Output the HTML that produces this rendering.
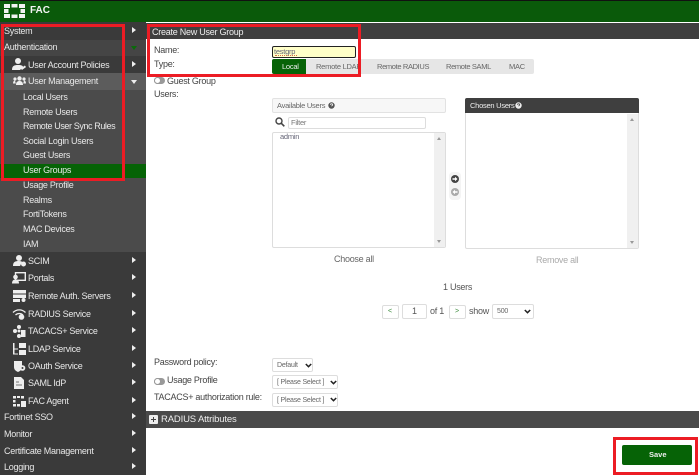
<!DOCTYPE html>
<html><head><meta charset="utf-8">
<style>
html,body{margin:0;padding:0;background:#fff}
#p{position:relative;width:699px;height:475px;overflow:hidden;background:#fff;font-family:"Liberation Sans",sans-serif;font-size:9px;letter-spacing:-.27px;color:#444}
#p div,#p span.a,#p svg{position:absolute}
.t{white-space:nowrap;line-height:12px;height:12px;filter:blur(.25px)}
.s{color:#e8e8e8}
.m{font-size:7.500px;letter-spacing:-.25px}
.arr{width:0;height:0;border-left:4px solid #eee;border-top:3.5px solid transparent;border-bottom:3.5px solid transparent;left:132px}
.red{border:3px solid #ec1c24;box-sizing:border-box}
.sel{box-sizing:border-box;border:1px solid #ddd;border-radius:2px;background:#fff;color:#666;font-size:7px;letter-spacing:-.2px;line-height:13px;padding-left:4px;white-space:nowrap}
.chev{width:7px;height:5px}
.b{box-sizing:border-box;border:1px solid #ddd;border-radius:2px;background:#fff}
</style></head><body><div id="p">
<div style="left:0;top:0;width:699px;height:1px;background:#111"></div>
<div style="left:0;top:1px;width:699px;height:21px;background:#0a5a0a"></div>
<svg style="left:4px;top:4px" width="21" height="14" viewBox="0 0 21 14"><g fill="#f2f2f2"><rect x="0" y="0" width="6" height="4"/><rect x="7.500" y="0" width="6" height="3.500"/><rect x="15" y="0" width="6" height="4"/><rect x="0" y="5" width="4.500" height="4"/><rect x="16.500" y="5" width="4.500" height="4"/><rect x="0" y="10" width="6" height="4"/><rect x="7.500" y="10.500" width="6" height="3.500"/><rect x="15" y="10" width="6" height="4"/></g></svg>
<div class="t" style="left:30px;top:4px;font-size:10px;font-weight:bold;letter-spacing:0;color:#f4f4f4;line-height:14px;height:14px">FAC</div>

<div style="left:0;top:22px;width:146px;height:453px;background:#3a3a3a"></div>
<div style="left:0;top:40px;width:146px;height:16px;background:#454545"></div>
<div style="left:0;top:73px;width:146px;height:17px;background:#5c5c5c"></div>
<div style="left:0;top:90px;width:146px;height:162px;background:#4b4b4b"></div>
<div style="left:0;top:164px;width:146px;height:14px;background:#066306"></div>

<div class="t s" style="left:4px;top:25px">System</div>
<div class="t s" style="left:4px;top:41px">Authentication</div>
<div class="t s" style="left:28px;top:59px">User Account Policies</div>
<div class="t s" style="left:28px;top:75px">User Management</div>
<div class="t s" style="left:23px;top:91px">Local Users</div>
<div class="t s" style="left:23px;top:106px">Remote Users</div>
<div class="t s" style="left:23px;top:120px;letter-spacing:-.4px">Remote User Sync Rules</div>
<div class="t s" style="left:23px;top:135px">Social Login Users</div>
<div class="t s" style="left:23px;top:149px">Guest Users</div>
<div class="t s" style="left:23px;top:164px">User Groups</div>
<div class="t s" style="left:23px;top:179px">Usage Profile</div>
<div class="t s" style="left:23px;top:194px">Realms</div>
<div class="t s" style="left:23px;top:208px">FortiTokens</div>
<div class="t s" style="left:23px;top:223px">MAC Devices</div>
<div class="t s" style="left:23px;top:238px">IAM</div>
<div class="t s" style="left:28px;top:255px">SCIM</div>
<div class="t s" style="left:28px;top:272px">Portals</div>
<div class="t s" style="left:28px;top:290px">Remote Auth. Servers</div>
<div class="t s" style="left:28px;top:308px">RADIUS Service</div>
<div class="t s" style="left:28px;top:325px">TACACS+ Service</div>
<div class="t s" style="left:28px;top:343px">LDAP Service</div>
<div class="t s" style="left:28px;top:360px">OAuth Service</div>
<div class="t s" style="left:28px;top:377px">SAML IdP</div>
<div class="t s" style="left:28px;top:395px">FAC Agent</div>
<div class="t s" style="left:4px;top:411px">Fortinet SSO</div>
<div class="t s" style="left:4px;top:428px">Monitor</div>
<div class="t s" style="left:4px;top:445px">Certificate Management</div>
<div class="t s" style="left:4px;top:461px">Logging</div>

<div class="arr" style="top:27px"></div>
<div style="left:131px;top:46px;width:0;height:0;border-top:4px solid #0a6a0a;border-left:3.5px solid transparent;border-right:3.5px solid transparent"></div>
<div class="arr" style="top:61px"></div>
<div style="left:131px;top:80px;width:0;height:0;border-top:4px solid #eee;border-left:3.5px solid transparent;border-right:3.5px solid transparent"></div>
<div class="arr" style="top:257px"></div>
<div class="arr" style="top:274px"></div>
<div class="arr" style="top:292px"></div>
<div class="arr" style="top:310px"></div>
<div class="arr" style="top:327px"></div>
<div class="arr" style="top:345px"></div>
<div class="arr" style="top:362px"></div>
<div class="arr" style="top:379px"></div>
<div class="arr" style="top:397px"></div>
<div class="arr" style="top:413px"></div>
<div class="arr" style="top:430px"></div>
<div class="arr" style="top:447px"></div>
<div class="arr" style="top:463px"></div>

<!-- side icons -->
<svg style="left:12px;top:58px" width="14" height="13" viewBox="0 0 14 13"><g fill="#eee"><circle cx="6" cy="3" r="3"/><path d="M0 12c0-4 2-5 6-5s5 1 5 2l-3 3z"/><rect x="9" y="9" width="5" height="2" transform="rotate(-35 11 10)"/></g></svg>
<svg style="left:13px;top:76px" width="13" height="10" viewBox="0 0 13 10"><g fill="#eee"><circle cx="6.5" cy="2.5" r="2.2"/><circle cx="2" cy="3" r="1.6"/><circle cx="11" cy="3" r="1.6"/><path d="M3 9c0-3 1.500-4 3.500-4s3.500 1 3.500 4zM0 7.500c0-2 .8-3 2-3l.8 3zM13 7.500c0-2-.8-3-2-3l-.8 3z"/></g></svg>
<svg style="left:13px;top:255px" width="13" height="12" viewBox="0 0 13 12"><g fill="#eee"><circle cx="6" cy="3" r="3"/><path d="M0 11c0-4 2-5 6-5 2 0 3 .5 3 1l-2 4z"/><circle cx="10.500" cy="9" r="2.500"/></g></svg>
<svg style="left:12px;top:272px" width="14" height="12" viewBox="0 0 14 12"><rect x="3.500" y=".7" width="9.800" height="7.600" fill="none" stroke="#eee" stroke-width="1.400"/><circle cx="3.500" cy="5" r="2.300" fill="#eee"/><path d="M0 11.500c0-3 1.500-4 3.500-4s3.500 1 3.500 4z" fill="#eee"/></svg>
<svg style="left:13px;top:290px" width="14" height="12" viewBox="0 0 14 12"><g fill="#eee"><rect x="0" y="0" width="13" height="3.500"/><rect x="0" y="4.500" width="13" height="3.500"/><rect x="0" y="9" width="7" height="3"/><circle cx="10.500" cy="10" r="2"/></g></svg>
<svg style="left:12px;top:308px" width="15" height="12" viewBox="0 0 15 12"><g fill="none" stroke="#eee" stroke-width="1.300"><path d="M1 4.500c3.500-3.500 9-3.500 12.500 0"/><path d="M3.500 7c2-2 5.500-2 7.500 0"/></g><circle cx="9.500" cy="9" r="2.800" fill="#eee"/></svg>
<svg style="left:13px;top:325px" width="13" height="13" viewBox="0 0 13 13"><g fill="#eee"><circle cx="6" cy="2" r="2"/><circle cx="2" cy="6" r="2"/><circle cx="6" cy="6" r="1.500"/><circle cx="6" cy="11" r="2"/><rect x="8" y="5" width="4.500" height="7"/></g></svg>
<svg style="left:13px;top:343px" width="13" height="12" viewBox="0 0 13 12"><g fill="#eee"><rect x="6" y="0" width="7" height="5"/><rect x="6" y="7" width="7" height="5"/><path d="M0 0h1.500v5.500H5v1H1.500v4H5v1H0z"/></g></svg>
<svg style="left:13px;top:360px" width="13" height="13" viewBox="0 0 13 13"><path d="M1 1h8v6c0 3-2 4-4 5-2-1-4-2-4-5z" fill="#eee"/><circle cx="9.500" cy="8" r="2.800" fill="#eee"/><circle cx="9.500" cy="8" r="1" fill="#3a3a3a"/></svg>
<svg style="left:14px;top:377px" width="10" height="12" viewBox="0 0 10 12"><path d="M0 0h7l3 3v9H0z" fill="#eee"/><path d="M2 8h6M2 5h3" stroke="#777" stroke-width="1"/></svg>
<svg style="left:13px;top:396px" width="13" height="11" viewBox="0 0 13 11"><g fill="#eee"><rect x="0" y="0" width="3" height="2.500"/><rect x="4" y="0" width="3" height="2"/><rect x="8" y="0" width="3" height="2.500"/><rect x="0" y="4" width="2.500" height="2.500"/><rect x="0" y="8" width="3" height="2.500"/><rect x="4" y="8" width="3" height="2.500"/><rect x="8" y="5" width="5" height="6"/></g></svg>

<!-- main header -->
<div style="left:146px;top:23px;width:553px;height:16px;background:#3f3f3f"></div>
<div class="t" style="left:152px;top:26px;color:#eee;font-size:9px;letter-spacing:-.25px">Create New User Group</div>
<div class="t" style="left:154px;top:44px">Name:</div>
<div class="t" style="left:154px;top:58px">Type:</div>
<div style="left:272px;top:46px;width:84px;height:12px;box-sizing:border-box;background:#ffffc8;border:1px solid #222;border-radius:2px"></div>
<div class="t m" style="left:274px;top:46px;color:#667">testgrp</div>
<div style="left:275px;top:55px;width:22px;height:0;border-top:1px dotted #d86a4a"></div>
<div style="left:272px;top:59px;width:262px;height:15px;background:#e6e6e6;border-radius:2px"></div>
<div style="left:272px;top:59px;width:34px;height:15px;background:#066306;border-radius:2px 0 0 2px"></div>
<div class="t m" style="left:282px;top:61px;color:#eee">Local</div>
<div class="t m" style="left:316px;top:61px;color:#666">Remote LDAP</div>
<div class="t m" style="left:377px;top:61px;color:#666;letter-spacing:-.35px">Remote RADIUS</div>
<div class="t m" style="left:446px;top:61px;color:#666;letter-spacing:-.35px">Remote SAML</div>
<div class="t m" style="left:509px;top:61px;color:#666">MAC</div>

<div style="left:154px;top:77px;width:11px;height:7px;background:#999;border-radius:3.5px"></div>
<div style="left:154px;top:77px;width:7px;height:7px;background:#fff;border:1px solid #999;box-sizing:border-box;border-radius:3.5px"></div>
<div class="t" style="left:167px;top:75px">Guest Group</div>
<div class="t" style="left:154px;top:88px">Users:</div>

<!-- Available -->
<div style="left:272px;top:98px;width:174px;height:15px;box-sizing:border-box;border:1px solid #e2e2e2;background:#f7f7f7;border-radius:2px"></div>
<div class="t m" style="left:277px;top:100px;color:#666">Available Users</div>
<svg style="left:328px;top:102px" width="7" height="7" viewBox="0 0 7 7"><circle cx="3.500" cy="3.500" r="3.200" fill="#555"/><path d="M2.400 2.800c0-1.300 2.300-1.300 2.300 0 0 .8-1.100.8-1.100 1.500" fill="none" stroke="#fff" stroke-width=".8"/></svg>
<svg style="left:275px;top:117px" width="10" height="10" viewBox="0 0 10 10"><circle cx="4" cy="4" r="3" fill="none" stroke="#444" stroke-width="1.400"/><path d="M6.200 6.200L9.300 9.300" stroke="#444" stroke-width="1.600"/></svg>
<div class="b" style="left:288px;top:117px;width:138px;height:12px"></div>
<div class="t m" style="left:291px;top:117px;color:#777">Filter</div>
<div class="b" style="left:272px;top:132px;width:174px;height:116px;border-color:#ddd"></div>
<div style="left:434px;top:133px;width:11px;height:114px;background:#f0f0f0"></div>
<div style="left:437px;top:137px;width:0;height:0;border-bottom:3px solid #999;border-left:2.500px solid transparent;border-right:2.500px solid transparent"></div>
<div style="left:437px;top:240px;width:0;height:0;border-top:3px solid #999;border-left:2.500px solid transparent;border-right:2.500px solid transparent"></div>
<div class="t m" style="left:280px;top:131px;color:#667">admin</div>

<!-- arrows -->
<div style="left:449px;top:172px;width:12px;height:28px;background:#f4f4f4;border-radius:4px"></div>
<svg style="left:451px;top:175px" width="8" height="8" viewBox="0 0 8 8"><circle cx="4" cy="4" r="4" fill="#444"/><path d="M1.500 3.300h2.500V1.800L6.500 4 4 6.200V4.700H1.500z" fill="#fff"/></svg>
<svg style="left:451px;top:188px" width="8" height="8" viewBox="0 0 8 8"><circle cx="4" cy="4" r="4" fill="#aaa"/><path d="M6.500 3.300H4V1.800L1.500 4 4 6.200V4.700h2.500z" fill="#fff"/></svg>

<!-- Chosen -->
<div class="b" style="left:465px;top:98px;width:174px;height:151px;border-color:#ddd"></div>
<div style="left:465px;top:98px;width:174px;height:15px;background:#3f3f3f;border-radius:2px 2px 0 0"></div>
<div class="t m" style="left:470px;top:100px;color:#eee">Chosen Users</div>
<svg style="left:515px;top:102px" width="7" height="7" viewBox="0 0 7 7"><circle cx="3.500" cy="3.500" r="3.200" fill="#eee"/><path d="M2.400 2.800c0-1.300 2.300-1.300 2.300 0 0 .8-1.100.8-1.100 1.500" fill="none" stroke="#444" stroke-width=".8"/></svg>
<div style="left:627px;top:114px;width:11px;height:134px;background:#f0f0f0"></div>
<div style="left:630px;top:118px;width:0;height:0;border-bottom:3px solid #999;border-left:2.500px solid transparent;border-right:2.500px solid transparent"></div>
<div style="left:630px;top:241px;width:0;height:0;border-top:3px solid #999;border-left:2.500px solid transparent;border-right:2.500px solid transparent"></div>

<div class="t" style="left:334px;top:253px;color:#666">Choose all</div>
<div class="t" style="left:536px;top:254px;color:#aaa">Remove all</div>
<div class="t" style="left:443px;top:281px;color:#555">1 Users</div>

<!-- pagination -->
<div class="b" style="left:382px;top:305px;width:17px;height:14px"></div>
<div class="t" style="left:388px;top:306px;font-size:7px;color:#3a8a3a">&lt;</div>
<div class="b" style="left:402px;top:304px;width:25px;height:15px"></div>
<div class="t" style="left:412px;top:305px;color:#555">1</div>
<div class="t" style="left:430px;top:305px;color:#555">of 1</div>
<div class="b" style="left:449px;top:305px;width:17px;height:14px"></div>
<div class="t" style="left:455px;top:306px;font-size:7px;color:#3a8a3a">&gt;</div>
<div class="t" style="left:469px;top:305px;color:#555">show</div>
<div class="sel" style="left:492px;top:304px;width:42px;height:15px">500</div>
<svg class="chev" style="left:524px;top:309px" viewBox="0 0 7 5"><path d="M.8 1l2.700 2.700L6.200 1" fill="none" stroke="#222" stroke-width="1.500"/></svg>

<!-- lower form -->
<div class="t" style="left:154px;top:356px">Password policy:</div>
<div class="sel" style="left:272px;top:358px;width:41px;height:14px">Default</div>
<svg class="chev" style="left:305px;top:363px" viewBox="0 0 7 5"><path d="M.8 1l2.700 2.700L6.200 1" fill="none" stroke="#222" stroke-width="1.500"/></svg>
<div style="left:154px;top:378px;width:11px;height:7px;background:#999;border-radius:3.5px"></div>
<div style="left:154px;top:378px;width:7px;height:7px;background:#fff;border:1px solid #999;box-sizing:border-box;border-radius:3.5px"></div>
<div class="t" style="left:167px;top:374px">Usage Profile</div>
<div class="sel" style="left:272px;top:375px;width:66px;height:14px">[ Please Select ]</div>
<svg class="chev" style="left:330px;top:380px" viewBox="0 0 7 5"><path d="M.8 1l2.700 2.700L6.200 1" fill="none" stroke="#222" stroke-width="1.500"/></svg>
<div class="t" style="left:154px;top:391px">TACACS+ authorization rule:</div>
<div class="sel" style="left:272px;top:393px;width:66px;height:14px">[ Please Select ]</div>
<svg class="chev" style="left:330px;top:397px" viewBox="0 0 7 5"><path d="M.8 1l2.700 2.700L6.200 1" fill="none" stroke="#222" stroke-width="1.500"/></svg>

<div style="left:146px;top:411px;width:553px;height:17px;background:#4a4a4a"></div>
<div style="left:149px;top:415px;width:9px;height:9px;background:#eee;border-radius:1px"></div>
<div style="left:151px;top:419px;width:5px;height:1px;background:#444"></div>
<div style="left:153px;top:417px;width:1px;height:5px;background:#444"></div>
<div class="t" style="left:161px;top:414px;color:#eee;font-size:9.500px;letter-spacing:-.15px">RADIUS Attributes</div>

<div style="left:622px;top:445px;width:70px;height:20px;background:#066306;border-radius:2px"></div>
<div class="t" style="left:649px;top:449px;color:#eee;font-size:7.500px;letter-spacing:0;font-weight:bold">Save</div>

<div class="red" style="left:1px;top:24px;width:124px;height:157px"></div>
<div class="red" style="left:147px;top:24px;width:214px;height:53px"></div>
<div class="red" style="left:613px;top:437px;width:85px;height:38px"></div>
</div></body></html>
